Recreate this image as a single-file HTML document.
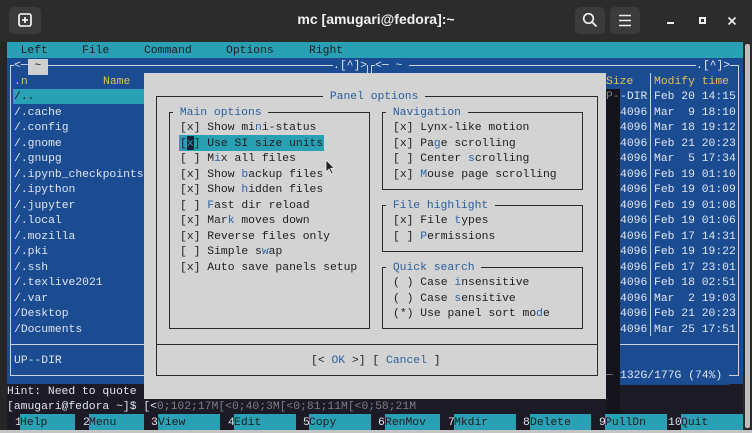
<!DOCTYPE html>
<html><head><meta charset="utf-8">
<style>
*{margin:0;padding:0;box-sizing:border-box}
body{width:752px;height:433px;overflow:hidden;background:#262626;position:relative;font-family:"Liberation Mono","DejaVu Sans Mono",monospace;font-size:11.37px}
.a{position:absolute}
.t{position:absolute;white-space:pre;line-height:15.5px;height:15.5px;margin-top:1.5px}
.w{color:#dfe5ee}.y{color:#e2c15a}.k{color:#1d1d1d}.b{color:#2c5f9c}.g{color:#7b7f88}
.h{color:#2c64a8}
.box{position:absolute;border:1px solid #2a2a2a}
.pbox{position:absolute;border:1px solid #c9d2de}
.cy{background:#2aa0b4}
.fk{margin-top:0;padding-top:1.5px}
</style></head><body>
<!-- title bar -->
<div class="a" style="left:0;top:0;width:752px;height:42px;background:#2c2c2c"></div>
<div class="a" style="left:9px;top:7px;width:32px;height:27px;background:#3b3b3b;border-radius:5px"></div>
<svg class="a" style="left:18px;top:13px" width="14" height="14" viewBox="0 0 14 14"><rect x="1" y="1" width="12" height="12" rx="2" fill="none" stroke="#fff" stroke-width="1.6"/><path d="M7 4v6M4 7h6" stroke="#fff" stroke-width="1.6"/></svg>
<div class="a" style="left:226px;top:11px;width:300px;text-align:center;color:#f0f0f0;font-family:'Liberation Sans',sans-serif;font-weight:bold;font-size:14px">mc [amugari@fedora]:~</div>
<div class="a" style="left:575px;top:7px;width:30px;height:27px;background:#3b3b3b;border-radius:5px"></div>
<svg class="a" style="left:582px;top:12px" width="16" height="16" viewBox="0 0 16 16"><circle cx="6.5" cy="6.5" r="4.8" fill="none" stroke="#eee" stroke-width="1.7"/><path d="M10 10l4.5 4.5" stroke="#eee" stroke-width="1.8"/></svg>
<div class="a" style="left:610px;top:7px;width:30px;height:27px;background:#3b3b3b;border-radius:5px"></div>
<svg class="a" style="left:618px;top:14px" width="14" height="13" viewBox="0 0 14 13"><path d="M1 1.5h12M1 6.5h12M1 11.5h12" stroke="#eee" stroke-width="1.6"/></svg>
<div class="a" style="left:667px;top:22px;width:7px;height:2px;background:#eee"></div>
<div class="a" style="left:699px;top:17px;width:7px;height:7px;border:2px solid #eee"></div>
<svg class="a" style="left:727px;top:16px" width="10" height="10" viewBox="0 0 10 10"><path d="M1.5 1.5l7 7M8.5 1.5l-7 7" stroke="#eee" stroke-width="1.6"/></svg>
<!-- terminal -->
<div class="a" style="left:7px;top:42px;width:736px;height:388px;background:#1c1a24"></div>
<div class="a" style="left:743px;top:42px;width:9px;height:391px;background:#2a2a2a"></div>
<div class="a" style="left:745px;top:44px;width:5px;height:384px;background:#bdbdbd;border-radius:2px"></div>
<div class="a" style="left:0;top:430px;width:752px;height:3px;background:#c4c4c4"></div>
<!-- menu -->
<div class="a cy" style="left:7px;top:42px;width:736px;height:15.5px"></div>
<div class="t k" style="left:20.6px;top:42px">Left</div>
<div class="t k" style="left:82px;top:42px">File</div>
<div class="t k" style="left:144px;top:42px">Command</div>
<div class="t k" style="left:226px;top:42px">Options</div>
<div class="t k" style="left:309px;top:42px">Right</div>
<!-- panels bg -->
<div class="a" style="left:7px;top:57.5px;width:736px;height:326px;background:#1b4c92"></div>
<div class="pbox" style="left:10px;top:65px;width:358px;height:311px"></div>
<div class="pbox" style="left:371px;top:65px;width:368px;height:311px"></div>
<div class="a" style="left:10px;top:344px;width:358px;height:1px;background:#c9d2de"></div>
<div class="a" style="left:371px;top:344px;width:368px;height:1px;background:#c9d2de"></div>
<div class="a" style="left:650px;top:73px;width:1px;height:263px;background:#c9d2de"></div>
<div class="t w" style="left:14px;top:57.5px;background:#1b4c92">&lt;─</div>
<div class="t k" style="left:27.5px;top:57.5px;background:#d0d0d0"> ~ </div>
<div class="t w" style="left:333px;top:57.5px;background:#1b4c92">.[^]&gt;</div>
<div class="t w" style="left:375px;top:57.5px;background:#1b4c92">&lt;─ ~ </div>
<div class="t w" style="left:696px;top:57.5px;background:#1b4c92">.[^]&gt;</div>
<div class="t y" style="left:14px;top:73px">.n</div>
<div class="t y" style="left:103px;top:73px">Name</div>
<div class="t y" style="left:606px;top:73px">Size</div>
<div class="t y" style="left:654px;top:73px">Modify time</div>
<div class="a cy" style="left:13px;top:88.5px;width:131px;height:15.5px"></div>
<div class="t k" style="left:14px;top:88.5px">/..</div>
<div class="t w" style="left:14px;top:104px;line-height:15.5px;height:auto">/.cache
/.config
/.gnome
/.gnupg
/.ipynb_checkpoints
/.ipython
/.jupyter
/.local
/.mozilla
/.pki
/.ssh
/.texlive2021
/.var
/Desktop
/Documents</div>
<div class="t w" style="left:14px;top:352px">UP--DIR</div>
<div class="t w" style="left:620px;top:88.5px;height:auto">-DIR
4096
4096
4096
4096
4096
4096
4096
4096
4096
4096
4096
4096
4096
4096
4096</div>
<div class="t w" style="left:654px;top:88.5px;height:auto">Feb 20 14:15
Mar  9 18:10
Mar 18 19:12
Feb 21 20:23
Mar  5 17:34
Feb 19 01:10
Feb 19 01:09
Feb 19 01:08
Feb 19 01:06
Feb 17 14:31
Feb 19 19:22
Feb 17 23:01
Feb 18 02:51
Mar  2 19:03
Feb 21 20:23
Mar 25 17:51</div>
<div class="t w" style="left:620px;top:367.5px;background:#1b4c92">132G/177G (74%) </div>
<!-- hint / prompt / fkeys -->
<div class="t w" style="left:7px;top:383px">Hint: Need to quote</div>
<div class="t w" style="left:7px;top:398.5px">[amugari@fedora ~]$ [&lt;<span class="g">0;102;17M[&lt;0;40;3M[&lt;0;81;11M[&lt;0;58;21M</span></div>
<div class="a" style="left:606px;top:88.5px;width:14px;height:325.5px;background:#15141c"></div>
<div class="t g" style="left:606px;top:88.5px">P-</div>
<div class="t g" style="left:606px;top:367.5px">─</div>
<!-- dialog -->
<div class="a" style="left:144px;top:73px;width:462px;height:325.5px;background:#d3d3d3"></div>
<div class="box" style="left:156px;top:96px;width:442px;height:280px"></div>
<div class="a" style="left:156px;top:344px;width:442px;height:1px;background:#2a2a2a"></div>
<div class="t b" style="left:323px;top:88.5px;background:#d3d3d3"> Panel options </div>
<div class="t k" style="left:311px;top:352px">[&lt; <span class="b">OK</span> &gt;] [ <span class="b">Cancel</span> ]</div>
<div class="box" style="left:169px;top:112px;width:201px;height:217px"></div>
<div class="t b" style="left:173px;top:104px;background:#d3d3d3"> Main options </div>
<div class="box" style="left:382px;top:112px;width:201px;height:78px"></div>
<div class="t b" style="left:386px;top:104px;background:#d3d3d3"> Navigation </div>
<div class="box" style="left:382px;top:205px;width:201px;height:47px"></div>
<div class="t b" style="left:386px;top:197px;background:#d3d3d3"> File highlight </div>
<div class="box" style="left:382px;top:267px;width:201px;height:62px"></div>
<div class="t b" style="left:386px;top:259px;background:#d3d3d3"> Quick search </div>
<div class="a cy" style="left:179px;top:135px;width:145px;height:15.5px"></div>
<div class="a" style="left:186.5px;top:136px;width:7px;height:14px;background:#13233a"></div>
<div class="t k" style="left:180px;top:119.5px">[x] Show mi<span class="h">n</span>i-status</div>
<div class="t k" style="left:180px;top:135px">[<span style="color:#2aa0b4">x</span>] Use SI size units</div>
<div class="t k" style="left:180px;top:150.5px">[ ] M<span class="h">i</span>x all files</div>
<div class="t k" style="left:180px;top:166px">[x] Show <span class="h">b</span>ackup files</div>
<div class="t k" style="left:180px;top:181.5px">[x] Show <span class="h">h</span>idden files</div>
<div class="t k" style="left:180px;top:197px">[ ] <span class="h">F</span>ast dir reload</div>
<div class="t k" style="left:180px;top:212.5px">[x] Mar<span class="h">k</span> moves down</div>
<div class="t k" style="left:180px;top:228px">[x] Reverse files only</div>
<div class="t k" style="left:180px;top:243.5px">[ ] Simple s<span class="h">w</span>ap</div>
<div class="t k" style="left:180px;top:259px">[x] Auto save panels setup</div>
<div class="t k" style="left:393px;top:119.5px">[x] Lynx-like motion</div>
<div class="t k" style="left:393px;top:135px">[x] Pa<span class="h">g</span>e scrolling</div>
<div class="t k" style="left:393px;top:150.5px">[ ] Center <span class="h">s</span>crolling</div>
<div class="t k" style="left:393px;top:166px">[x] <span class="h">M</span>ouse page scrolling</div>
<div class="t k" style="left:393px;top:212.5px">[x] File <span class="h">t</span>ypes</div>
<div class="t k" style="left:393px;top:228px">[ ] <span class="h">P</span>ermissions</div>
<div class="t k" style="left:393px;top:274.5px">( ) Case <span class="h">i</span>nsensitive</div>
<div class="t k" style="left:393px;top:290px">( ) Case <span class="h">s</span>ensitive</div>
<div class="t k" style="left:393px;top:305.5px">(*) Use panel sort mo<span class="h">d</span>e</div>
<svg class="a" style="left:325px;top:159px" width="10" height="16" viewBox="0 0 10 16"><path d="M1 1v12l3-3 2.5 5 1.6-.8-2.4-4.9H9.5z" fill="#222" stroke="#eee" stroke-width=".8"/></svg>
<!-- fkeys -->
<div class="t w" style="left:15px;top:414px">1</div><div class="t k cy fk" style="left:20px;top:414px;width:55px">Help</div>
<div class="t w" style="left:83px;top:414px">2</div><div class="t k cy fk" style="left:89px;top:414px;width:55px">Menu</div>
<div class="t w" style="left:151px;top:414px">3</div><div class="t k cy fk" style="left:158px;top:414px;width:62px">View</div>
<div class="t w" style="left:228px;top:414px">4</div><div class="t k cy fk" style="left:234px;top:414px;width:62px">Edit</div>
<div class="t w" style="left:303px;top:414px">5</div><div class="t k cy fk" style="left:309px;top:414px;width:62px">Copy</div>
<div class="t w" style="left:378px;top:414px">6</div><div class="t k cy fk" style="left:385px;top:414px;width:55px">RenMov</div>
<div class="t w" style="left:448px;top:414px">7</div><div class="t k cy fk" style="left:454px;top:414px;width:62px">Mkdir</div>
<div class="t w" style="left:523px;top:414px">8</div><div class="t k cy fk" style="left:530px;top:414px;width:61px">Delete</div>
<div class="t w" style="left:599px;top:414px">9</div><div class="t k cy fk" style="left:605px;top:414px;width:62px">PullDn</div>
<div class="t w" style="left:668px;top:414px">10</div><div class="t k cy fk" style="left:681px;top:414px;width:62px">Quit</div>
</body></html>
